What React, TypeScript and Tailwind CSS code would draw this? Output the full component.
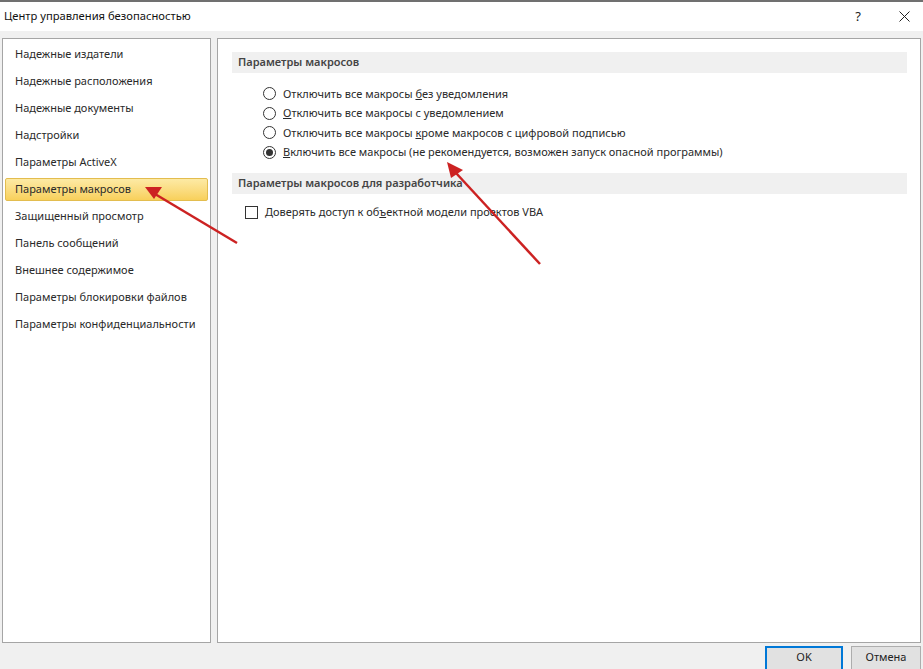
import React from "react";

const leftItems = [
  "Надежные издатели",
  "Надежные расположения",
  "Надежные документы",
  "Надстройки",
  "Параметры ActiveX",
  "Параметры макросов",
  "Защищенный просмотр",
  "Панель сообщений",
  "Внешнее содержимое",
  "Параметры блокировки файлов",
  "Параметры конфиденциальности",
];

function Radio({ checked }: { checked?: boolean }) {
  return (
    <span className="w-[13px] h-[13px] rounded-full border border-[#333] bg-white flex items-center justify-center shrink-0">
      {checked && <span className="w-[7px] h-[7px] rounded-full bg-[#333]" />}
    </span>
  );
}

export default function App() {
  const font = { fontFamily: '"Noto Sans", "Open Sans", sans-serif' };
  return (
    <div
      className="relative w-[923px] h-[669px] overflow-hidden bg-[#f0f0f0] flex flex-col text-[11px] text-[#222] whitespace-nowrap"
      style={font}
    >
      {/* title bar */}
      <div className="h-[31px] shrink-0 bg-white border-t-2 border-[#707070] flex items-center pl-[4px] pr-[10px]">
        <span className="text-[11.2px] text-[#111]">Центр управления безопасностью</span>
        <span className="ml-auto mr-[38px] text-[13px] text-[#222]">?</span>
        <svg width="11" height="11" viewBox="0 0 11 11" className="mr-[3px]">
          <path d="M0.5 0.5 L10.5 10.5 M10.5 0.5 L0.5 10.5" stroke="#222" strokeWidth="1" />
        </svg>
      </div>

      {/* content */}
      <div className="flex gap-[6px] px-[2px] pt-[7px] h-[612px] shrink-0">
        {/* left panel */}
        <div className="w-[209px] h-[605px] bg-white border border-[#a5a5a5] pt-[2px] px-[2px]">
          {leftItems.map((t, i) => (
            <div key={t} className="h-[27px] py-[2px]">
              <div
                className={
                  "h-[23px] flex items-center pl-[9px] rounded-[2px] border " +
                  (i === 5
                    ? "border-[#e3bd4f] bg-gradient-to-b from-[#fdeaa4] to-[#f8d05a]"
                    : "border-transparent")
                }
              >
                <span className="text-[#2a2a2a]">{t}</span>
              </div>
            </div>
          ))}
        </div>

        {/* right panel */}
        <div className="flex-1 h-[605px] bg-white border border-[#a5a5a5] pt-[13px] pl-[14px] pr-[13px]">
          <div className="h-[21px] bg-[#f0f0f0] flex items-center pl-[6px]">
            <span className="font-semibold text-[#444]">Параметры макросов</span>
          </div>
          <div className="pt-[11px] pl-[31px] flex flex-col">
            {[
              <>Отключить все макросы <u>б</u>ез уведомления</>,
              <><u>О</u>тключить все макросы с уведомлением</>,
              <>Отключить все макросы <u>к</u>роме макросов с цифровой подписью</>,
              <><u>В</u>ключить все макросы (не рекомендуется, возможен запуск опасной программы)</>,
            ].map((lbl, i) => (
              <div key={i} className="h-[19.5px] flex items-center gap-[7px]">
                <Radio checked={i === 3} />
                <span className="text-[#2a2a2a]">{lbl}</span>
              </div>
            ))}
          </div>
          <div className="mt-[11px] h-[21px] bg-[#f0f0f0] flex items-center pl-[6px]">
            <span className="font-semibold text-[#444]">Параметры макросов для разработчика</span>
          </div>
          <div className="pt-[8px] pl-[13px] flex items-center gap-[7px] h-[28px]">
            <span className="w-[13px] h-[13px] border border-[#333] bg-white shrink-0" />
            <span className="text-[#2a2a2a]">
              Доверять доступ к об<u>ъ</u>ектной модели проектов VBA
            </span>
          </div>
        </div>
      </div>

      {/* footer */}
      <div className="flex justify-end gap-[8px] pr-[2px] pt-[3px]">
        <button className="w-[78px] h-[26px] bg-[#e1e1e1] border-2 border-[#0078d7] text-[11px] text-[#222] pb-[4px]">
          OK
        </button>
        <button className="w-[70px] h-[26px] bg-[#e1e1e1] border border-[#adadad] text-[11px] text-[#222] pb-[4px]">
          Отмена
        </button>
      </div>

      {/* annotation arrows */}
      <svg className="absolute inset-0 pointer-events-none" width="923" height="669">
        <line x1="237" y1="243" x2="155" y2="194" stroke="#cc2222" strokeWidth="2.5" />
        <polygon points="145,187 162,187 154,199" fill="#cc2222" transform="rotate(0)" />
        <line x1="540" y1="264" x2="456" y2="173" stroke="#cc2222" strokeWidth="2.5" />
        <polygon points="447,162 463,170 451,178" fill="#cc2222" />
      </svg>
    </div>
  );
}
